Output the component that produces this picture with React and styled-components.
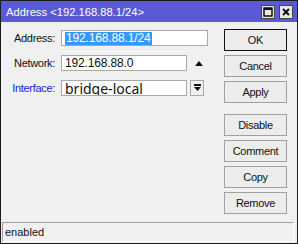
import React from 'react';
import styled, { createGlobalStyle } from 'styled-components';

const Global = createGlobalStyle`
  html, body { margin: 0; padding: 0; background: #f0f0f0; }
  body { font-family: "Liberation Sans", Arial, sans-serif; }
  * { box-sizing: border-box; }
`;

const Window = styled.div`
  width: 298px;
  height: 244px;
  border: 1px solid #1c1c1c;
  background: #f0f0f0;
  display: flex;
  flex-direction: column;
`;

const TitleBar = styled.div`
  height: 21px;
  background: #5a5ad4;
  display: flex;
  align-items: center;
  padding: 0 4px 0 5px;
  color: #fff;
  font-size: 11.2px;
`;

const Title = styled.div`
  flex: 1;
`;

const TitleButton = styled.div`
  width: 14px;
  height: 14px;
  margin-left: 4px;
  background: #e8e8e8;
  border: 1px solid #444;
  display: flex;
  align-items: center;
  justify-content: center;
`;

const Body = styled.div`
  flex: 1;
  display: flex;
  padding-top: 7px;
`;

const Form = styled.div`
  width: 223px;
  padding-top: 1px;
  display: flex;
  flex-direction: column;
  gap: 9px;
`;

const Row = styled.div`
  display: flex;
  align-items: center;
  height: 16px;
`;

const Label = styled.div`
  width: 54px;
  margin-right: 6px;
  text-align: right;
  font-size: 11px;
  letter-spacing: -0.3px;
  color: ${p => (p.$link ? '#1a1ad0' : '#111')};
`;

const Input = styled.div`
  width: ${p => p.$w}px;
  height: 16px;
  background: #fff;
  border: 1px solid #a8a8a8;
  display: flex;
  align-items: center;
  padding-left: 3px;
  font-size: ${p => (p.$big ? '14px' : '12px')};
  letter-spacing: ${p => (p.$big ? '0' : '-0.15px')};
  font-family: ${p => (p.$big ? '"Noto Sans", "Open Sans", sans-serif' : '"Liberation Sans", Arial, sans-serif')};
  color: #111;
  overflow: hidden;
  white-space: nowrap;
`;

const Selected = styled.span`
  background: #3399ff;
  color: #fff;
  line-height: 13px;
  padding: 0 1px;
`;

const ArrowSlot = styled.div`
  width: 16px;
  height: 16px;
  margin-left: ${p => p.$ml}px;
  display: flex;
  align-items: center;
  justify-content: center;
`;

const DropButton = styled.div`
  width: 14px;
  height: 16px;
  margin-left: 3px;
  border: 1px solid #a8a8a8;
  background: #f0f0f0;
  display: flex;
  align-items: center;
  justify-content: center;
`;

const Buttons = styled.div`
  width: 63px;
  display: flex;
  flex-direction: column;
`;

const Button = styled.div`
  height: 22px;
  margin-bottom: ${p => (p.$gapAfter ? 11 : 4)}px;
  border: 1px solid ${p => (p.$default ? '#111' : '#a0a0a0')};
  background: #ececec;
  display: flex;
  align-items: center;
  justify-content: center;
  font-size: 11px;
  letter-spacing: -0.3px;
  color: #111;
`;

const Status = styled.div`
  height: 20px;
  margin: 0 3px 1px 1px;
  border-top: 1px solid #a0a0a0;
  border-left: 1px solid #a0a0a0;
  border-right: 1px solid #fff;
  border-bottom: 1px solid #fff;
  display: flex;
  align-items: center;
  padding-left: 2px;
  font-size: 11px;
  color: #111;
`;

export default function App() {
  return (
    <>
      <Global />
      <Window>
        <TitleBar>
          <Title>Address &lt;192.168.88.1/24&gt;</Title>
          <TitleButton>
            <svg width="10" height="10" viewBox="0 0 10 10">
              <rect x="1" y="1" width="8" height="8" fill="none" stroke="#111" strokeWidth="1.5" />
              <rect x="1" y="1" width="8" height="2" fill="#111" />
            </svg>
          </TitleButton>
          <TitleButton>
            <svg width="10" height="10" viewBox="0 0 10 10">
              <path d="M2 2 L8 8 M8 2 L2 8" stroke="#111" strokeWidth="2" />
            </svg>
          </TitleButton>
        </TitleBar>
        <Body>
          <Form>
            <Row>
              <Label>Address:</Label>
              <Input $w={147}><Selected>192.168.88.1/24</Selected></Input>
            </Row>
            <Row>
              <Label>Network:</Label>
              <Input $w={126}>192.168.88.0</Input>
              <ArrowSlot $ml={4}>
                <svg width="8" height="5" viewBox="0 0 8 5">
                  <path d="M0 5 L4 0 L8 5 Z" fill="#111" />
                </svg>
              </ArrowSlot>
            </Row>
            <Row>
              <Label $link>Interface:</Label>
              <Input $w={126} $big>bridge-local</Input>
              <DropButton>
                <svg width="7" height="8" viewBox="0 0 7 8">
                  <rect x="0" y="0" width="7" height="2" fill="#111" />
                  <path d="M0 3 L7 3 L3.5 7 Z" fill="#111" />
                </svg>
              </DropButton>
            </Row>
          </Form>
          <Buttons>
            <Button $default>OK</Button>
            <Button>Cancel</Button>
            <Button $gapAfter>Apply</Button>
            <Button>Disable</Button>
            <Button>Comment</Button>
            <Button>Copy</Button>
            <Button>Remove</Button>
          </Buttons>
        </Body>
        <Status>enabled</Status>
      </Window>
    </>
  );
}
